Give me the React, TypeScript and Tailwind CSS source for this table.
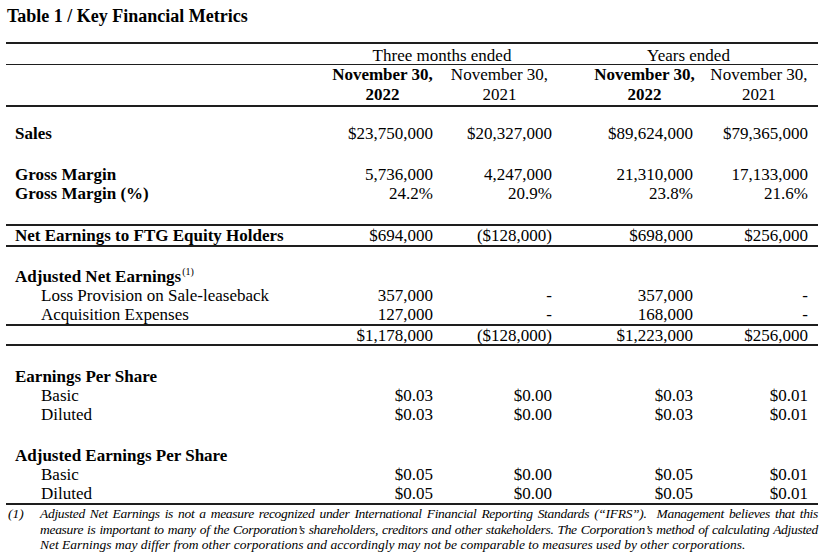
import React from "react";

type Row = {
  label: string;
  values: string[];
  bold?: boolean;
  indent?: boolean;
  sup?: string;
};

const cols = "grid grid-cols-[319px_115px_119px_141px_118px]";
const pads = ["pr-[7px]", "pr-[7px]", "pr-[7px]", "pr-[10px]"];

const DataRow = ({ row, h = "h-[19px]" }: { row: Row; h?: string }) => (
  <div className={`${cols} ${h} items-center leading-[19px]`}>
    <div
      className={`${row.indent ? "pl-[35px]" : "pl-[9px]"} ${row.bold ? "font-bold" : ""} whitespace-nowrap`}
    >
      {row.label}
      {row.sup && (
        <span className="text-[10px] font-normal ml-[1px] relative top-[-7px] leading-none">{row.sup}</span>
      )}
    </div>
    {row.values.map((v, i) => (
      <div key={i} className={`text-right whitespace-nowrap ${pads[i]}`}>
        {v}
      </div>
    ))}
  </div>
);

const Rule = () => <div className="h-[2px] bg-[#1e1e1e]" />;

export default function App() {
  return (
    <div className="w-[822px] h-[557px] bg-white text-black overflow-hidden font-['Liberation_Serif',serif] text-[17px]">
      <div className="pt-[5px] pl-[7px] h-[27px] text-[18px] font-bold leading-[22px]">
        Table 1 / Key Financial Metrics
      </div>

      <div className="ml-[6px] w-[812px] mt-[15px]">
        <Rule />
        {/* period heading */}
        <div className={`${cols} h-[20px] leading-[20px] items-center pt-[2px]`}>
          <div />
          <div className="col-span-2 text-center">Three months ended</div>
          <div className="col-span-2 text-center">Years ended</div>
        </div>
        <div className="h-[1px] bg-[#1e1e1e]" />
        <div className={`${cols} leading-[20px]`}>
          <div />
          <div className="text-center font-bold">
            November 30,
            <br />
            2022
          </div>
          <div className="text-center">
            November 30,
            <br />
            2021
          </div>
          <div className="text-center font-bold pl-[30px]">
            November 30,
            <br />
            2022
          </div>
          <div className="text-center">
            November 30,
            <br />
            2021
          </div>
        </div>
        <Rule />

        <div className="h-[17px]" />
        <DataRow row={{ label: "Sales", bold: true, values: ["$23,750,000", "$20,327,000", "$89,624,000", "$79,365,000"] }} />

        <div className="h-[22px]" />
        <DataRow row={{ label: "Gross Margin", bold: true, values: ["5,736,000", "4,247,000", "21,310,000", "17,133,000"] }} />
        <DataRow row={{ label: "Gross Margin (%)", bold: true, values: ["24.2%", "20.9%", "23.8%", "21.6%"] }} />

        <div className="h-[21px]" />
        <Rule />
        <DataRow row={{ label: "Net Earnings to FTG Equity Holders", bold: true, values: ["$694,000", "($128,000)", "$698,000", "$256,000"] }} />
        <Rule />

        <div className="h-[20px]" />
        <DataRow row={{ label: "Adjusted Net Earnings", bold: true, sup: "(1)", values: ["", "", "", ""] }} />
        <DataRow row={{ label: "Loss Provision on Sale-leaseback", indent: true, values: ["357,000", "-", "357,000", "-"] }} />
        <DataRow row={{ label: "Acquisition Expenses", indent: true, values: ["127,000", "-", "168,000", "-"] }} />
        <Rule />
        <DataRow h="h-[18px]" row={{ label: "", values: ["$1,178,000", "($128,000)", "$1,223,000", "$256,000"] }} />
        <Rule />

        <div className="h-[21px]" />
        <DataRow row={{ label: "Earnings Per Share", bold: true, values: ["", "", "", ""] }} />
        <DataRow row={{ label: "Basic", indent: true, values: ["$0.03", "$0.00", "$0.03", "$0.01"] }} />
        <DataRow row={{ label: "Diluted", indent: true, values: ["$0.03", "$0.00", "$0.03", "$0.01"] }} />

        <div className="h-[22px]" />
        <DataRow row={{ label: "Adjusted Earnings Per Share", bold: true, values: ["", "", "", ""] }} />
        <DataRow row={{ label: "Basic", indent: true, values: ["$0.05", "$0.00", "$0.05", "$0.01"] }} />
        <DataRow row={{ label: "Diluted", indent: true, values: ["$0.05", "$0.00", "$0.05", "$0.01"] }} />
        <div className="h-[2px] bg-[#1e1e1e]" />

        {/* footnote */}
        <div className="flex italic text-[13.5px] leading-[15.5px] pt-[1px]">
          <div className="w-[34px] pl-[2px]">(1)</div>
          <div className="flex-1 min-w-0">
            <div className="whitespace-nowrap tracking-[-0.3px] text-justify [text-align-last:justify]">
              Adjusted Net Earnings is not a measure recognized under International Financial Reporting Standards (“IFRS”).&nbsp; Management believes that this
            </div>
            <div className="whitespace-nowrap tracking-[-0.3px] text-justify [text-align-last:justify]">
              measure is important to many of the Corporation’s shareholders, creditors and other stakeholders. The Corporation’s method of calculating Adjusted
            </div>
            <div className="whitespace-nowrap">
              Net Earnings may differ from other corporations and accordingly may not be comparable to measures used by other corporations.
            </div>
          </div>
        </div>
      </div>
    </div>
  );
}
